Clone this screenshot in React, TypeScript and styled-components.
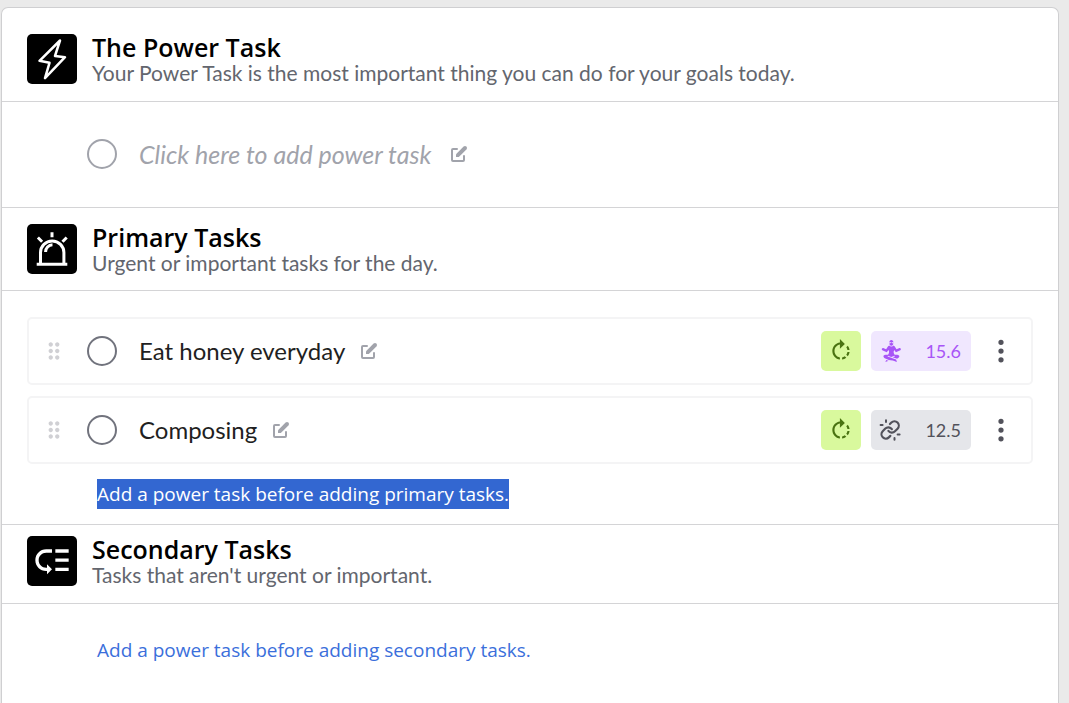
import React from "react";
import styled, { createGlobalStyle } from "styled-components";
import { GiMeditation } from "react-icons/gi";
import { HiPencilAlt } from "react-icons/hi";
import { MdLowPriority, MdDragIndicator, MdRotateRight } from "react-icons/md";
import { BsThreeDotsVertical } from "react-icons/bs";

const GlobalStyle = createGlobalStyle`
  *, *::before, *::after { box-sizing: border-box; }
  body {
    margin: 0;
    background: #eaeaea;
    color: #1f1f22;
    font-family: Lato, "Liberation Sans", sans-serif;
  }
  h2, p, ul { margin: 0; padding: 0; }
  button { font: inherit; color: inherit; border: 0; padding: 0; background: none; cursor: pointer; }
  svg { display: block; flex: none; }
`;

const Page = styled.div`
  display: flex;
  min-height: 100vh;
  padding: 7px 10px 0 1px;
`;

const Card = styled.main`
  flex: 1;
  min-width: 0;
  background: #fff;
  border: 1px solid #cfcfd1;
  border-bottom: 0;
  border-radius: 7px 7px 0 0;
`;

const Section = styled.section`
  & + & { border-top: 1px solid #d4d4d6; }
`;

const SectionHeader = styled.header<{ $space: "roomy" | "normal" | "tight" }>`
  display: flex;
  align-items: center;
  gap: 15px;
  padding: ${({ $space }) =>
    $space === "roomy" ? "25px 25px 16px" : $space === "tight" ? "10px 25px 16px" : "15px 25px"};
  border-bottom: 1px solid #d4d4d6;
`;

const Badge = styled.span`
  display: flex;
  align-items: center;
  justify-content: center;
  flex: none;
  width: 50px;
  height: 50px;
  border-radius: 5px;
  background: #000;
  color: #fff;
`;

const Title = styled.h2`
  font-family: "Open Sans", sans-serif;
  font-size: 25px;
  font-weight: 600;
  line-height: 28px;
  color: #000;
`;

const Subtitle = styled.p`
  font-size: 21px;
  line-height: 24px;
  color: #63666e;
`;

const PowerRow = styled.div`
  display: flex;
  align-items: center;
  gap: 22px;
  height: 105px;
  padding: 0 25px 2px 85px;
`;

const CheckCircle = styled.input<{ $faded?: boolean }>`
  appearance: none;
  flex: none;
  width: 30px;
  height: 30px;
  margin: 0;
  border: 2px solid ${({ $faded }) => ($faded ? "#a1a3ab" : "#71737d")};
  border-radius: 50%;
  cursor: pointer;
`;

const AddPowerTask = styled.button`
  display: flex;
  align-items: center;
  gap: 18px;
  font-size: 25px;
  line-height: 30px;
  font-style: italic;
  color: #a1a3ab;
`;

const TaskArea = styled.div`
  padding: 26px 25px 15px;
`;

const TaskList = styled.ul`
  display: grid;
  gap: 11px;
  list-style: none;
`;

const TaskRow = styled.li`
  display: flex;
  align-items: center;
  height: 68px;
  padding: 0 15px 0 12px;
  border: 2px solid #f4f4f5;
  border-radius: 5px;
`;

const DragHandle = styled.button`
  margin-right: 20px;
  color: #d0d0d4;
  cursor: grab;
`;

const TaskLabel = styled.label`
  display: flex;
  align-items: center;
  gap: 22px;
  font-size: 24px;
  line-height: 30px;
`;

const EditButton = styled.button`
  margin-left: 14px;
  color: #a1a3ab;
`;

const Actions = styled.div`
  display: flex;
  align-items: center;
  gap: 10px;
  margin-left: auto;
`;

const RepeatButton = styled.button`
  display: flex;
  align-items: center;
  justify-content: center;
  width: 40px;
  height: 40px;
  border-radius: 5px;
  background: #d9f99d;
  color: #4a7311;
`;

const Score = styled.button<{ $linked: boolean }>`
  display: flex;
  align-items: center;
  justify-content: space-between;
  width: 100px;
  height: 40px;
  padding: 0 10px 0 8px;
  border-radius: 5px;
  font-size: 18px;
  background: ${({ $linked }) => ($linked ? "#f0e7fe" : "#e5e6ea")};
  color: ${({ $linked }) => ($linked ? "#a855f7" : "#52525b")};
`;

const MenuButton = styled.button`
  margin: 0 1px 0 6px;
  color: #52525b;
`;

const Notice = styled.p<{ $top: number }>`
  padding: ${({ $top }) => $top}px 25px 0 70px;
  font-family: "Open Sans", sans-serif;
  font-size: 19px;
  line-height: 30px;
  color: #3b6fdb;
`;

const Selected = styled.span`
  display: inline-block;
  background: #3367d1;
  color: #fff;
`;

const BoltIcon = () => (
  <svg width="50" height="50" viewBox="0 0 50 50" fill="none" stroke="currentColor" strokeWidth="2.5" strokeLinejoin="round" aria-hidden="true">
    <path d="M33 6.5 28 22l10 1.2L18 44.2l4.5-15.4-10-2Z" />
  </svg>
);

const SirenIcon = () => (
  <svg width="50" height="50" viewBox="0 0 50 50" fill="none" stroke="currentColor" strokeWidth="3" aria-hidden="true">
    <path d="M9.7 40.3h30.6M13.5 40V28.6a11.7 11.7 0 0 1 23.4 0V40M18.6 28a7 7 0 0 1 6.9-7.2M25 8.3v5M10.9 13.5l4.2 4.2M39.7 13.5l-4.2 4.2" />
  </svg>
);

const BrokenLinkIcon = () => (
  <svg width="22" height="22" viewBox="0 0 22 22" fill="none" stroke="currentColor" strokeWidth="2.5" strokeLinecap="round" strokeLinejoin="round" aria-hidden="true">
    <g transform="translate(.7 .5) scale(.87)">
      <path d="M10 13a5 5 0 0 0 7.54.54l3-3a5 5 0 0 0-7.07-7.07l-1.72 1.71" />
      <path d="M14 11a5 5 0 0 0-7.54-.54l-3 3a5 5 0 0 0 7.07 7.07l1.71-1.71" />
    </g>
    <path strokeWidth="2" d="M1.6 6h2M7 1.2v1.8M15.5 19v1.8M18.6 15.4h2" />
  </svg>
);

type Task = { id: string; name: string; score: string; linked: boolean };

const tasks: Task[] = [
  { id: "honey", name: "Eat honey everyday", score: "15.6", linked: true },
  { id: "composing", name: "Composing", score: "12.5", linked: false },
];

function Header({ icon, title, subtitle, space }: {
  icon: React.ReactNode;
  title: string;
  subtitle: string;
  space: "roomy" | "normal" | "tight";
}) {
  return (
    <SectionHeader $space={space}>
      <Badge>{icon}</Badge>
      <div>
        <Title>{title}</Title>
        <Subtitle>{subtitle}</Subtitle>
      </div>
    </SectionHeader>
  );
}

function TaskItem({ task }: { task: Task }) {
  return (
    <TaskRow>
      <DragHandle aria-label={`Move ${task.name}`}><MdDragIndicator size={26} /></DragHandle>
      <TaskLabel htmlFor={task.id}>
        <CheckCircle type="checkbox" id={task.id} />
        {task.name}
      </TaskLabel>
      <EditButton aria-label={`Edit ${task.name}`}><HiPencilAlt size={20} /></EditButton>
      <Actions>
        <RepeatButton aria-label="Repeat"><MdRotateRight size={26} /></RepeatButton>
        <Score $linked={task.linked}>
          {task.linked ? <GiMeditation size={24} /> : <BrokenLinkIcon />}
          {task.score}
        </Score>
        <MenuButton aria-label="More options"><BsThreeDotsVertical size={28} /></MenuButton>
      </Actions>
    </TaskRow>
  );
}

export default function App() {
  return (
    <>
      <GlobalStyle />
      <Page>
        <Card>
          <Section>
            <Header
              icon={<BoltIcon />}
              title="The Power Task"
              subtitle="Your Power Task is the most important thing you can do for your goals today."
              space="roomy"
            />
            <PowerRow>
              <CheckCircle type="checkbox" $faded aria-label="Complete power task" />
              <AddPowerTask>
                Click here to add power task
                <HiPencilAlt size={20} />
              </AddPowerTask>
            </PowerRow>
          </Section>
          <Section>
            <Header
              icon={<SirenIcon />}
              title="Primary Tasks"
              subtitle="Urgent or important tasks for the day."
              space="normal"
            />
            <TaskArea>
              <TaskList>
                {tasks.map((task) => <TaskItem key={task.id} task={task} />)}
              </TaskList>
              <Notice $top={15}>
                <Selected>Add a power task before adding primary tasks.</Selected>
              </Notice>
            </TaskArea>
          </Section>
          <Section>
            <Header
              icon={<MdLowPriority size={40} />}
              title="Secondary Tasks"
              subtitle="Tasks that aren't urgent or important."
              space="tight"
            />
            <TaskArea>
              <Notice $top={5}>Add a power task before adding secondary tasks.</Notice>
            </TaskArea>
          </Section>
        </Card>
      </Page>
    </>
  );
}
